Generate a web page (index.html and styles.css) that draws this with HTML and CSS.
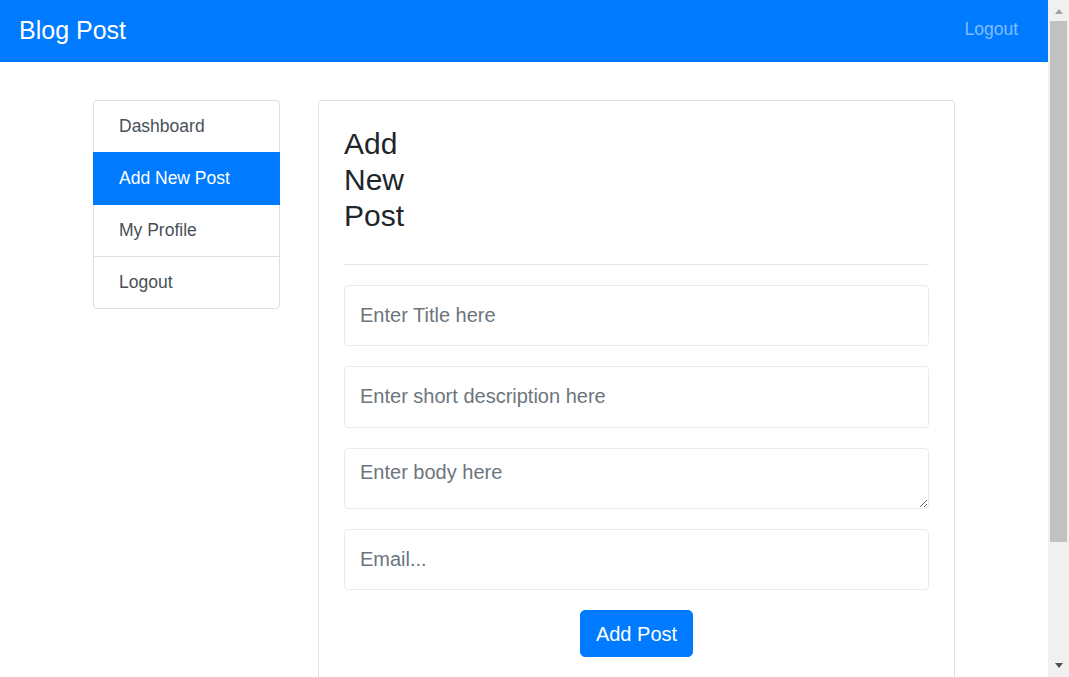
FILE: index.html
```html
<!DOCTYPE html>
<html lang="en">
<head>
<meta charset="utf-8">
<title>Blog Post - Add New Post</title>
<link rel="stylesheet" href="styles.css">
</head>
<body>
<nav class="navbar">
  <a class="brand" href="#">Blog Post</a>
  <a class="nav-link" href="#">Logout</a>
</nav>
<div class="page">
  <aside class="sidebar">
    <a class="side-item" href="#">Dashboard</a>
    <a class="side-item active" href="#">Add New Post</a>
    <a class="side-item" href="#">My Profile</a>
    <a class="side-item" href="#">Logout</a>
  </aside>
  <main class="card">
    <h3 class="card-title">Add New Post</h3>
    <hr class="divider">
    <form class="post-form">
      <input class="field" type="text" placeholder="Enter Title here">
      <input class="field" type="text" placeholder="Enter short description here">
      <textarea class="field area" placeholder="Enter body here"></textarea>
      <input class="field" type="email" placeholder="Email...">
      <div class="actions">
        <button class="btn" type="button">Add Post</button>
      </div>
    </form>
  </main>
</div>
<div class="scrollbar" aria-hidden="true">
  <div class="sb-btn"><span class="arrow-up"></span></div>
  <div class="sb-track"><div class="sb-thumb"></div></div>
  <div class="sb-btn"><span class="arrow-down"></span></div>
</div>
</body>
</html>
```

FILE: styles.css
```css
* { box-sizing: border-box; }
html, body { margin: 0; padding: 0; }
html { scrollbar-width: none; }
body {
  font-family: "Liberation Sans", Arial, sans-serif;
  color: #212529;
  background: #fff;
  margin-right: 21px;
}
a { text-decoration: none; }

/* window scrollbar drawn over the right edge */
.scrollbar {
  position: fixed;
  top: 0;
  right: 0;
  width: 21px;
  height: 100vh;
  background: #f0f0f0;
  display: flex;
  flex-direction: column;
  z-index: 10;
}
.sb-btn {
  height: 21px;
  flex: none;
  display: flex;
  justify-content: center;
  align-items: center;
}
.arrow-up {
  width: 0;
  height: 0;
  border-left: 4.5px solid transparent;
  border-right: 4.5px solid transparent;
  border-bottom: 5px solid #a3a3a3;
  margin-top: 2px;
}
.arrow-down {
  width: 0;
  height: 0;
  border-left: 4.5px solid transparent;
  border-right: 4.5px solid transparent;
  border-top: 5px solid #505050;
  margin-bottom: 2px;
}
.sb-track {
  flex: 1;
  padding: 0 2px;
}
.sb-thumb {
  height: 521px;
  background: #c1c1c1;
}

.navbar {
  height: 62px;
  background: #007bff;
  display: flex;
  align-items: center;
  justify-content: space-between;
  padding: 0 30px 0 19px;
}
.brand {
  color: #fff;
  font-size: 25px;
  line-height: 1.5;
}
.nav-link {
  color: rgba(255, 255, 255, 0.5);
  font-size: 17.5px;
  line-height: 1.5;
  margin-bottom: 3px;
}

.page {
  max-width: 862px;
  margin: 0 auto;
  padding: 38px 0 142px;
  display: flex;
  align-items: flex-start;
  gap: 38px;
}

.sidebar {
  width: 187px;
  flex: none;
  display: flex;
  flex-direction: column;
}
.side-item {
  height: 53px;
  display: flex;
  align-items: center;
  padding: 0 25px;
  border: 1px solid #dfdfdf;
  color: #495057;
  font-size: 17.5px;
  background: #fff;
}
.side-item + .side-item { margin-top: -1px; }
.side-item:first-child { border-radius: 4px 4px 0 0; }
.side-item:last-child { border-radius: 0 0 4px 4px; }
.side-item.active {
  background: #007bff;
  border-color: #007bff;
  color: #fff;
  position: relative;
  z-index: 1;
}

.card {
  flex: 1;
  border: 1px solid #dfdfdf;
  border-radius: 4px;
  padding: 25px;
}
.card-title {
  margin: 0 0 30px;
  max-width: 90px;
  font-size: 30px;
  line-height: 36px;
  font-weight: 400;
  color: #212529;
}
.divider {
  margin: 0 0 20px;
  border: 0;
  border-top: 1px solid #e6e6e6;
  height: 0;
}
.post-form {
  display: flex;
  flex-direction: column;
  gap: 20px;
}
.field {
  display: block;
  width: 100%;
  height: 61.33px;
  padding: 8px 15px;
  border: 1px solid #ebebeb;
  border-radius: 4px;
  font-family: "Liberation Sans", Arial, sans-serif;
  font-size: 20px;
  line-height: 30px;
  color: #495057;
  background: #fff;
  outline: none;
}
.field::placeholder { color: #6c757d; opacity: 1; }
.area { resize: vertical; }
.actions {
  display: flex;
  justify-content: center;
}
.btn {
  font-family: "Liberation Sans", Arial, sans-serif;
  font-size: 20px;
  line-height: 30px;
  padding: 7.5px 15px;
  border: 1px solid #007bff;
  border-radius: 5px;
  background: #007bff;
  color: #fff;
  cursor: pointer;
}
```
